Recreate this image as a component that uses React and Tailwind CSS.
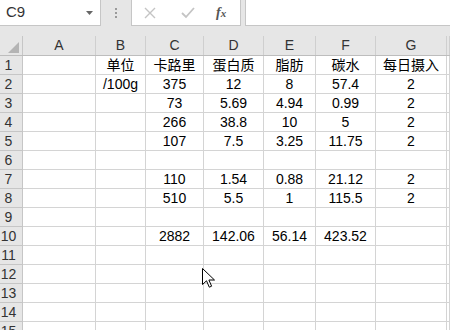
import React from "react";

const cols = ["A", "B", "C", "D", "E", "F", "G", ""];
const widths = ["w-[73px]", "w-[50px]", "w-[58px]", "w-[60px]", "w-[52px]", "w-[60px]", "w-[71px]", "flex-1"];

const rows = [
  ["", "单位", "卡路里", "蛋白质", "脂肪", "碳水", "每日摄入", ""],
  ["", "/100g", "375", "12", "8", "57.4", "2", ""],
  ["", "", "73", "5.69", "4.94", "0.99", "2", ""],
  ["", "", "266", "38.8", "10", "5", "2", ""],
  ["", "", "107", "7.5", "3.25", "11.75", "2", ""],
  ["", "", "", "", "", "", "", ""],
  ["", "", "110", "1.54", "0.88", "21.12", "2", ""],
  ["", "", "510", "5.5", "1", "115.5", "2", ""],
  ["", "", "", "", "", "", "", ""],
  ["", "", "2882", "142.06", "56.14", "423.52", "", ""],
  ["", "", "", "", "", "", "", ""],
  ["", "", "", "", "", "", "", ""],
  ["", "", "", "", "", "", "", ""],
  ["", "", "", "", "", "", "", ""],
  ["", "", "", "", "", "", "", ""],
];

export default function App() {
  return (
    <div
      className="w-[450px] h-[330px] overflow-hidden bg-[#e6e6e6] relative"
      style={{ fontFamily: '"Liberation Sans", "Noto Sans CJK SC", sans-serif' }}
    >
      {/* formula bar */}
      <div className="flex h-[26px]">
        <div className="w-[101px] h-[26px] bg-white border-b border-r border-[#c6c6c6] flex items-center justify-between pl-[6px] pr-[7px]">
          <span className="text-[15px] text-[#333]">C9</span>
          <svg width="7" height="4" viewBox="0 0 7 4">
            <path d="M0 0h7L3.5 4z" fill="#666" />
          </svg>
        </div>
        <div className="w-[30px] flex items-center justify-center">
          <div className="flex flex-col gap-[2px]">
            <span className="w-[2px] h-[2px] bg-[#9a9a9a]" />
            <span className="w-[2px] h-[2px] bg-[#9a9a9a]" />
            <span className="w-[2px] h-[2px] bg-[#9a9a9a]" />
          </div>
        </div>
        <div className="w-[110px] h-[26px] bg-white border border-t-0 border-[#c6c6c6] flex items-center">
          <svg width="14" height="14" viewBox="0 0 14 14" className="ml-[11px]">
            <path d="M2 2l10 10M12 2L2 12" stroke="#c4c4c4" strokeWidth="1.4" />
          </svg>
          <svg width="16" height="14" viewBox="0 0 16 14" className="ml-[23px]">
            <path d="M2 7l4 4 8-9" stroke="#c4c4c4" strokeWidth="1.8" fill="none" />
          </svg>
          <span
            className="ml-[20px] text-[14px] italic text-[#555] font-bold"
            style={{ fontFamily: '"Liberation Serif", serif' }}
          >
            f<span className="text-[11px]">x</span>
          </span>
        </div>
        <div className="w-[4px]" />
        <div className="flex-1 h-[26px] bg-white border-b border-l border-[#c6c6c6]" />
      </div>
      <div className="h-[10px]" />

      {/* column header */}
      <div className="flex h-[20px] border-b border-[#bdbdbd]">
        <div className="w-[23px] border-r border-[#c6c6c6] flex items-end justify-end pr-[3px] pb-[2px]">
          <svg width="11" height="11" viewBox="0 0 11 11">
            <path d="M11 0V11H0z" fill="#b4b4b4" />
          </svg>
        </div>
        {cols.map((c, i) => (
          <div
            key={i}
            className={`${widths[i]} border-r border-[#cfcfcf] flex items-center justify-center text-[14px] text-[#333]`}
          >
            {c}
          </div>
        ))}
      </div>

      {/* rows */}
      {rows.map((r, ri) => (
        <div key={ri} className="flex h-[19px]">
          <div className="w-[23px] border-r border-b border-[#c6c6c6] bg-[#e6e6e6] text-[14px] text-[#333] leading-[18px]">
            <div className="w-[17px] text-center">{ri + 1}</div>
          </div>
          {r.map((v, ci) => (
            <div
              key={ci}
              className={`${widths[ci]} bg-white border-r border-b border-[#d4d4d4] text-center text-[14px] text-black leading-[18px] whitespace-nowrap`}
            >
              {v}
            </div>
          ))}
        </div>
      ))}

      {/* mouse cursor */}
      <svg
        width="14"
        height="21"
        viewBox="0 0 14 21"
        className="absolute left-[202px] top-[268px]"
      >
        <path
          d="M0.5 0.5V16.5L4.5 12.8L7.3 19.2L9.6 18.2L6.9 12H12.5Z"
          fill="white"
          stroke="black"
          strokeWidth="1"
          strokeLinejoin="miter"
        />
      </svg>
    </div>
  );
}
